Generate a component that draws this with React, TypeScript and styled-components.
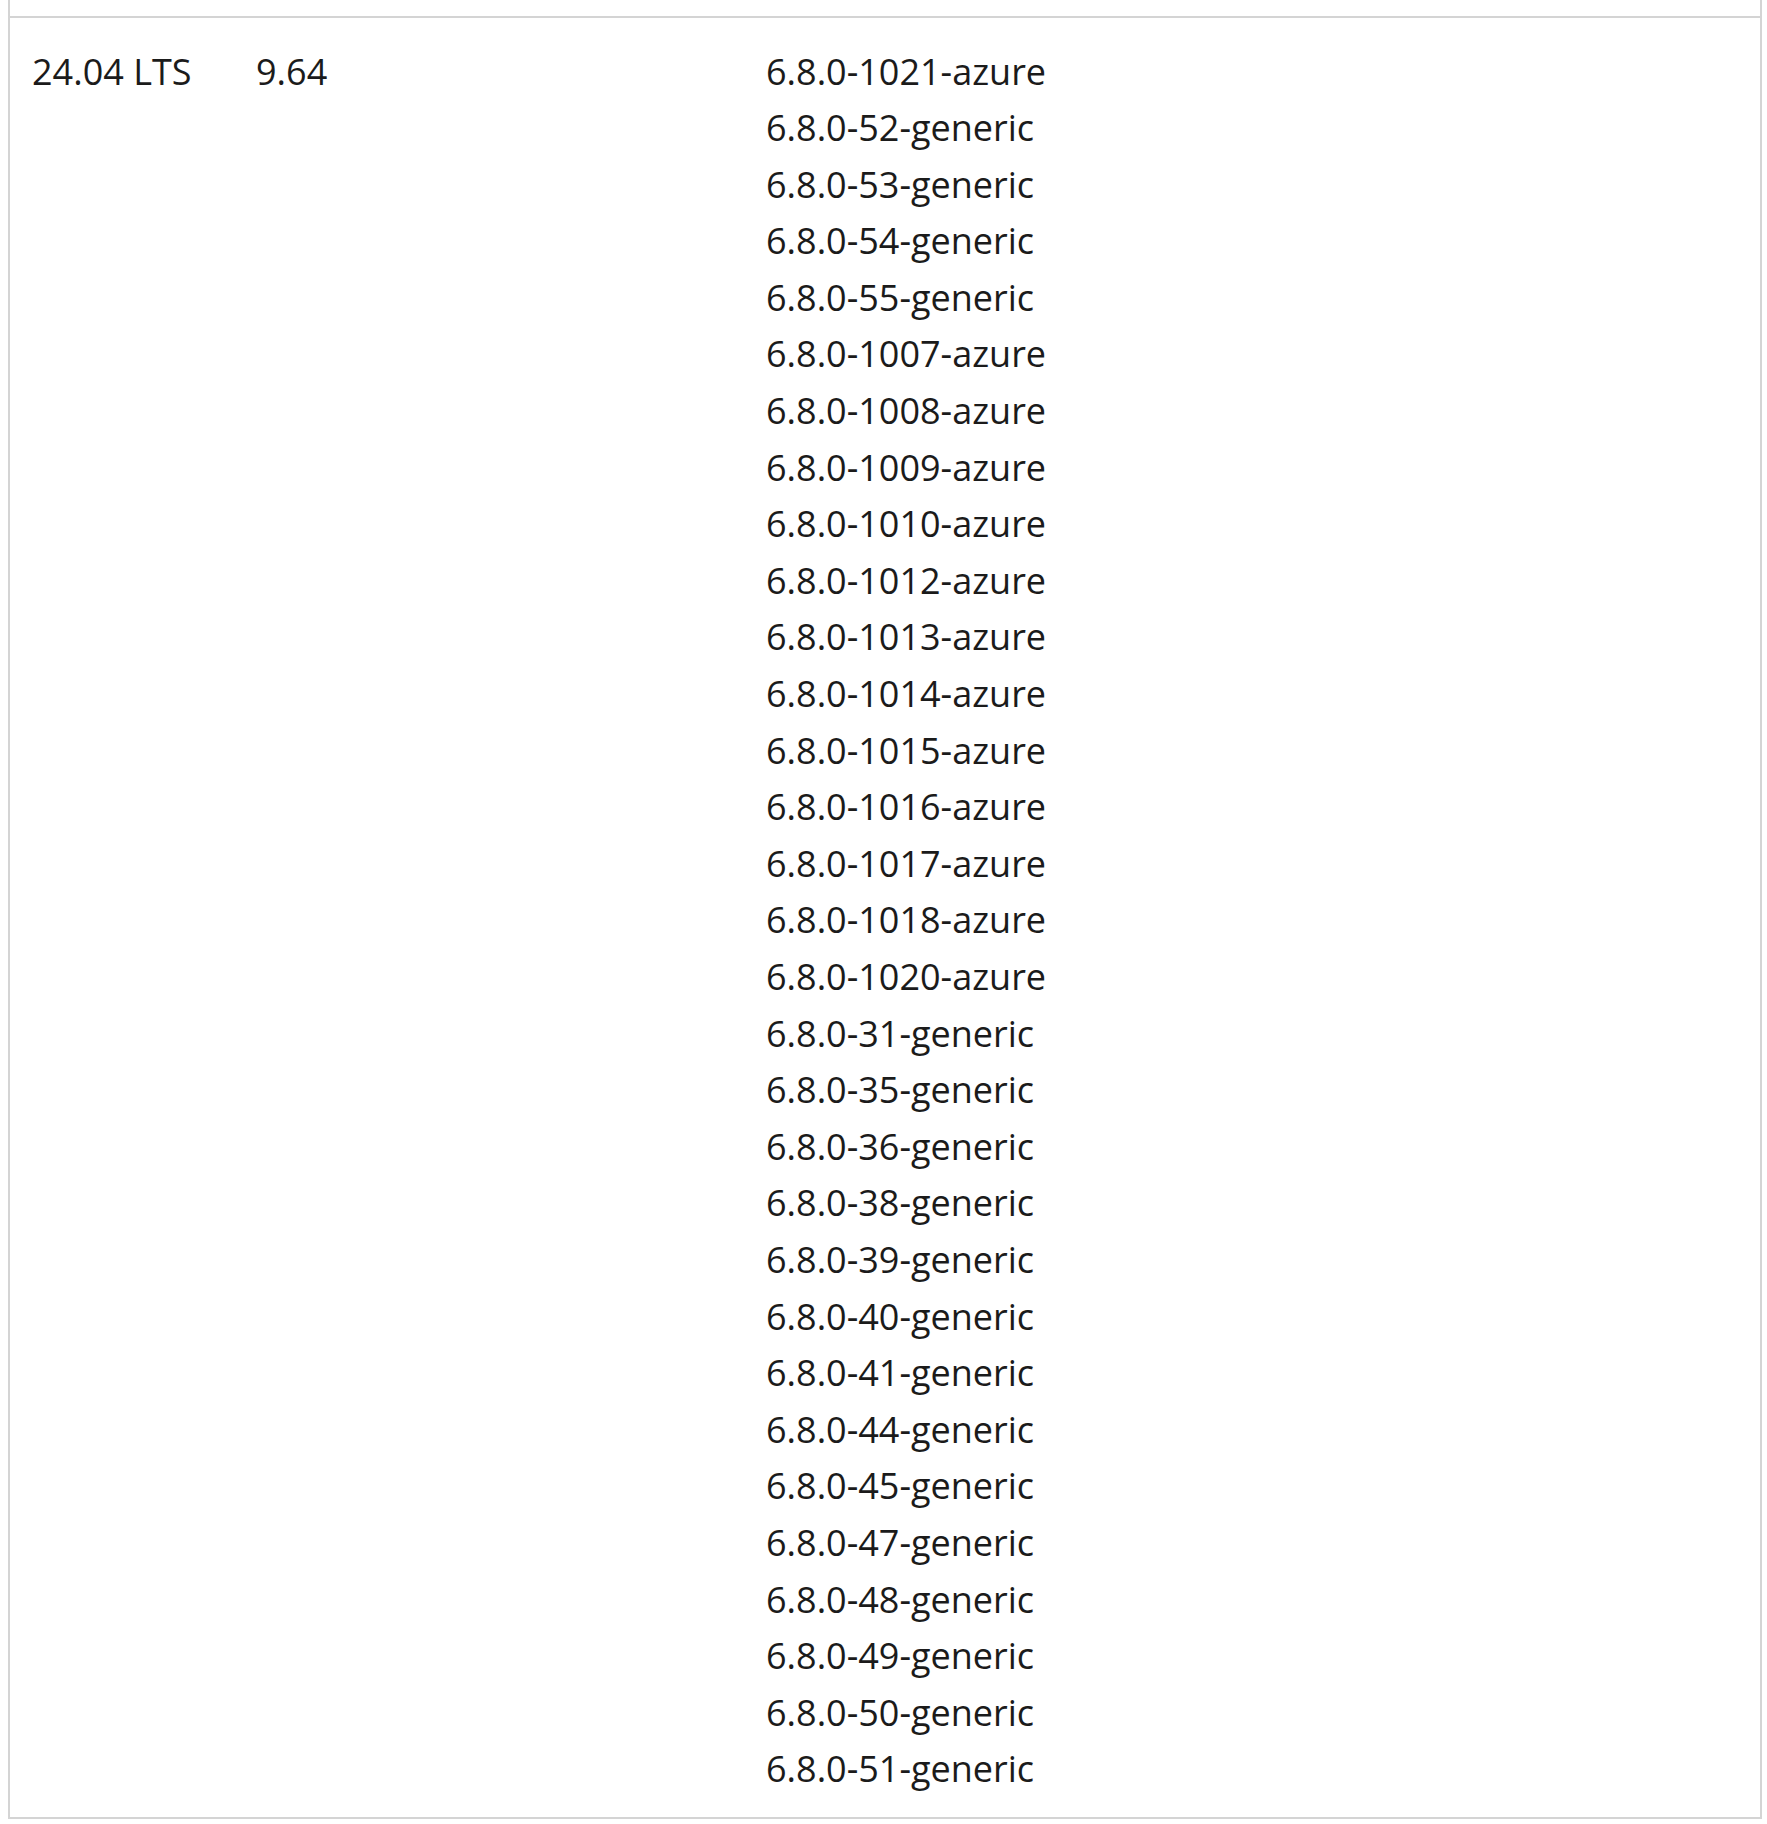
import React from "react";
import styled, { createGlobalStyle } from "styled-components";

const GlobalStyle = createGlobalStyle`
  html, body {
    margin: 0;
    padding: 0;
    background: #ffffff;
  }
  body {
    padding: 0 8px;
    font-family: "Open Sans", "Noto Sans", "Liberation Sans", sans-serif;
  }
`;

const Table = styled.div`
  width: 1754px;
  box-sizing: border-box;
  border-left: 2px solid #d4d4d4;
  border-right: 2px solid #d4d4d4;
  border-bottom: 2px solid #d4d4d4;
`;

const PrevRowTail = styled.div`
  height: 16px;
`;

const Row = styled.div`
  display: grid;
  grid-template-columns: 224px 510px 1fr;
  border-top: 2px solid #d4d4d4;
  padding: 25.5px 0 19.5px;
  color: #1b1b1b;
  font-size: 36px;
  line-height: 56.6px;
`;

const Cell = styled.div`
  padding-left: 22px;
  white-space: nowrap;
`;

const KernelList = styled.ul`
  list-style: none;
  margin: 0;
  padding: 0;
`;

const Kernel = styled.li`
  margin: 0;
`;

const kernels = [
  "6.8.0-1021-azure",
  "6.8.0-52-generic",
  "6.8.0-53-generic",
  "6.8.0-54-generic",
  "6.8.0-55-generic",
  "6.8.0-1007-azure",
  "6.8.0-1008-azure",
  "6.8.0-1009-azure",
  "6.8.0-1010-azure",
  "6.8.0-1012-azure",
  "6.8.0-1013-azure",
  "6.8.0-1014-azure",
  "6.8.0-1015-azure",
  "6.8.0-1016-azure",
  "6.8.0-1017-azure",
  "6.8.0-1018-azure",
  "6.8.0-1020-azure",
  "6.8.0-31-generic",
  "6.8.0-35-generic",
  "6.8.0-36-generic",
  "6.8.0-38-generic",
  "6.8.0-39-generic",
  "6.8.0-40-generic",
  "6.8.0-41-generic",
  "6.8.0-44-generic",
  "6.8.0-45-generic",
  "6.8.0-47-generic",
  "6.8.0-48-generic",
  "6.8.0-49-generic",
  "6.8.0-50-generic",
  "6.8.0-51-generic",
];

export default function App() {
  return (
    <>
      <GlobalStyle />
      <Table>
        <PrevRowTail />
        <Row>
          <Cell>24.04 LTS</Cell>
          <Cell>9.64</Cell>
          <Cell>
            <KernelList>
              {kernels.map((k) => (
                <Kernel key={k}>{k}</Kernel>
              ))}
            </KernelList>
          </Cell>
        </Row>
      </Table>
    </>
  );
}
